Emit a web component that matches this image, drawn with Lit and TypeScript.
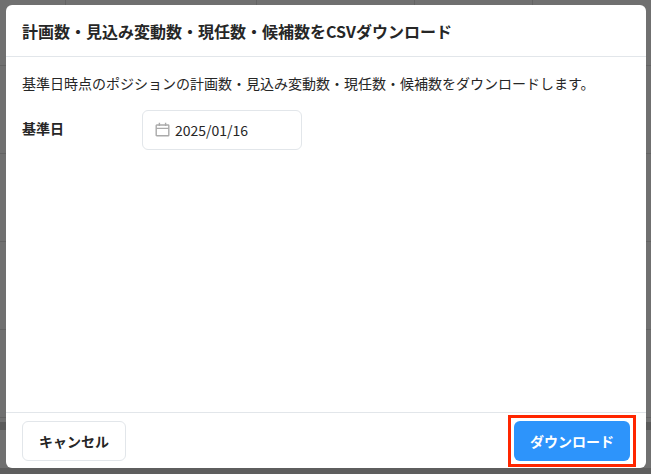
import { LitElement, html, css } from "lit";
import { customElement } from "lit/decorators.js";

const V_LINES = [65, 256, 414, 532];
const H_LINES = [65, 153, 241, 329, 417];

@customElement("app-root")
export class AppRoot extends LitElement {
  static styles = css`
    :host {
      display: block;
      font-family: "Noto Sans CJK JP", "Noto Sans", sans-serif;
      color: #262626;
    }
    .page {
      position: relative;
      width: 651px;
      height: 474px;
      box-sizing: border-box;
      padding: 5px 5px 6px 6px;
      background: #707070;
      display: flex;
      overflow: hidden;
    }
    .vline {
      position: absolute;
      top: 0;
      bottom: 0;
      width: 1px;
      background: #636363;
    }
    .hline {
      position: absolute;
      left: 0;
      right: 0;
      height: 1px;
      background: #636363;
    }
    .band {
      position: absolute;
      left: 0;
      right: 0;
      top: 422px;
      height: 8px;
      background: #5a5a5a;
    }
    .shade {
      position: absolute;
      left: 0;
      right: 0;
      bottom: 0;
      height: 6px;
      background: #5e5e5e;
    }
    .modal {
      position: relative;
      flex: 1;
      display: flex;
      flex-direction: column;
      background: #fff;
      border-radius: 6px;
      min-width: 0;
    }
    .header {
      height: 52px;
      box-sizing: border-box;
      padding: 0 16px;
      display: flex;
      align-items: center;
      font-size: 16px;
      font-weight: 700;
      line-height: 24px;
      border-bottom: 1px solid #e2e6ea;
    }
    .body {
      flex: 1;
      padding: 16px;
      display: flex;
      flex-direction: column;
      gap: 14px;
    }
    .desc {
      font-size: 14px;
      line-height: 24px;
      height: 24px;
      margin-top: -2px;
      margin-bottom: 1px;
    }
    .row {
      display: flex;
      align-items: center;
    }
    .label {
      width: 120px;
      font-size: 14px;
      font-weight: 700;
      margin-top: -5px;
    }
    .date {
      width: 160px;
      height: 40px;
      box-sizing: border-box;
      border: 1px solid #e2e6ea;
      border-radius: 6px;
      padding: 0 12px;
      display: flex;
      align-items: center;
      gap: 5px;
      font-size: 14px;
    }
    .date svg {
      width: 15px;
      height: 15px;
      flex: none;
      margin-top: -2px;
    }
    .footer {
      height: 56px;
      box-sizing: border-box;
      padding: 8px 16px;
      display: flex;
      justify-content: space-between;
      align-items: center;
      border-top: 1px solid #e2e6ea;
    }
    .btn {
      height: 40px;
      box-sizing: border-box;
      border-radius: 6px;
      font-family: inherit;
      font-size: 14px;
      font-weight: 700;
      padding: 0 16px;
      display: flex;
      align-items: center;
    }
    .cancel {
      background: #fff;
      border: 1px solid #e2e6ea;
      color: #262626;
    }
    .primary {
      background: #2d94fb;
      border: none;
      color: #fff;
    }
    .highlight {
      border: 3px solid #ff2600;
      padding: 3px;
      margin: -6px;
      display: flex;
    }
  `;

  render() {
    return html`
      <div class="page">
        ${V_LINES.map((x) => html`<div class="vline" style="left:${x}px"></div>`)}
        ${H_LINES.map((y) => html`<div class="hline" style="top:${y}px"></div>`)}
        <div class="band"></div>
        <div class="shade"></div>
        <div class="modal">
          <div class="header">計画数・見込み変動数・現任数・候補数をCSVダウンロード</div>
          <div class="body">
            <div class="desc">基準日時点のポジションの計画数・見込み変動数・現任数・候補数をダウンロードします。</div>
            <div class="row">
              <div class="label">基準日</div>
              <div class="date">
                <svg viewBox="0 0 15 15" fill="none" stroke="#aaaaaa" stroke-width="1.4">
                  <rect x="1.2" y="3" width="12.6" height="10.8" rx="0.6"></rect>
                  <path d="M1.2 6.4H13.8M4.4 0.8V4M10.6 0.8V4"></path>
                </svg>
                <span>2025/01/16</span>
              </div>
            </div>
          </div>
          <div class="footer">
            <button class="btn cancel">キャンセル</button>
            <div class="highlight"><button class="btn primary">ダウンロード</button></div>
          </div>
        </div>
      </div>
    `;
  }
}
